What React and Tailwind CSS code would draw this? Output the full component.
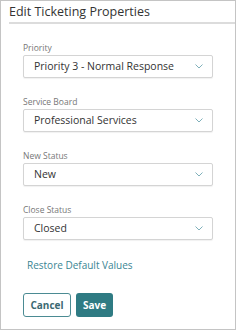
const fields = [
  { label: 'Priority', value: 'Priority 3 - Normal Response' },
  { label: 'Service Board', value: 'Professional Services' },
  { label: 'New Status', value: 'New' },
  { label: 'Close Status', value: 'Closed' },
];

const Chevron = () => (
  <svg width="8" height="5" viewBox="0 0 8 5" fill="none" className="shrink-0">
    <path d="M0.5 0.5 L4 4 L7.5 0.5" stroke="#7fb0ba" strokeWidth="1" />
  </svg>
);

const SelectField = ({ label, value }) => (
  <div className="flex flex-col">
    <label className="text-[8.5px] leading-[10px] text-[#777] mb-[2px]">{label}</label>
    <div className="h-[23px] border border-[#d4d4d4] rounded-[2px] bg-white flex items-center justify-between pl-[10px] pr-[9px] shadow-[0_1px_1px_rgba(0,0,0,0.06)]">
      <span className="text-[10.5px] text-[#333]">{value}</span>
      <Chevron />
    </div>
  </div>
);

export default function App() {
  return (
    <div
      className="w-[236px] h-[330px] bg-white border border-[#c4c4c4] flex flex-col"
      style={{ fontFamily: '"Open Sans", "Noto Sans", sans-serif' }}
    >
      <div className="ml-[8px] h-[23px] border-b-2 border-[#dcdcdc] flex items-center">
        <h1 className="text-[12.5px] text-[#333] pt-[1px]">Edit Ticketing Properties</h1>
      </div>
      <div className="px-[22px] pt-[19px] flex flex-col gap-[19px]">
        {fields.map((f) => (
          <SelectField key={f.label} {...f} />
        ))}
      </div>
      <div className="px-[26px] mt-[16px] leading-[14px]">
        <a className="text-[10px] text-[#3a8593]">Restore Default Values</a>
      </div>
      <div className="px-[22px] mt-[21px] flex gap-[5px]">
        <button className="w-[48px] h-[24px] border border-[#4b8b93] rounded-[3px] text-[10px] font-bold text-[#3b6a72] bg-white">
          Cancel
        </button>
        <button className="w-[37px] h-[24px] rounded-[3px] text-[10px] font-bold text-white bg-[#2f7b83]">
          Save
        </button>
      </div>
    </div>
  );
}
